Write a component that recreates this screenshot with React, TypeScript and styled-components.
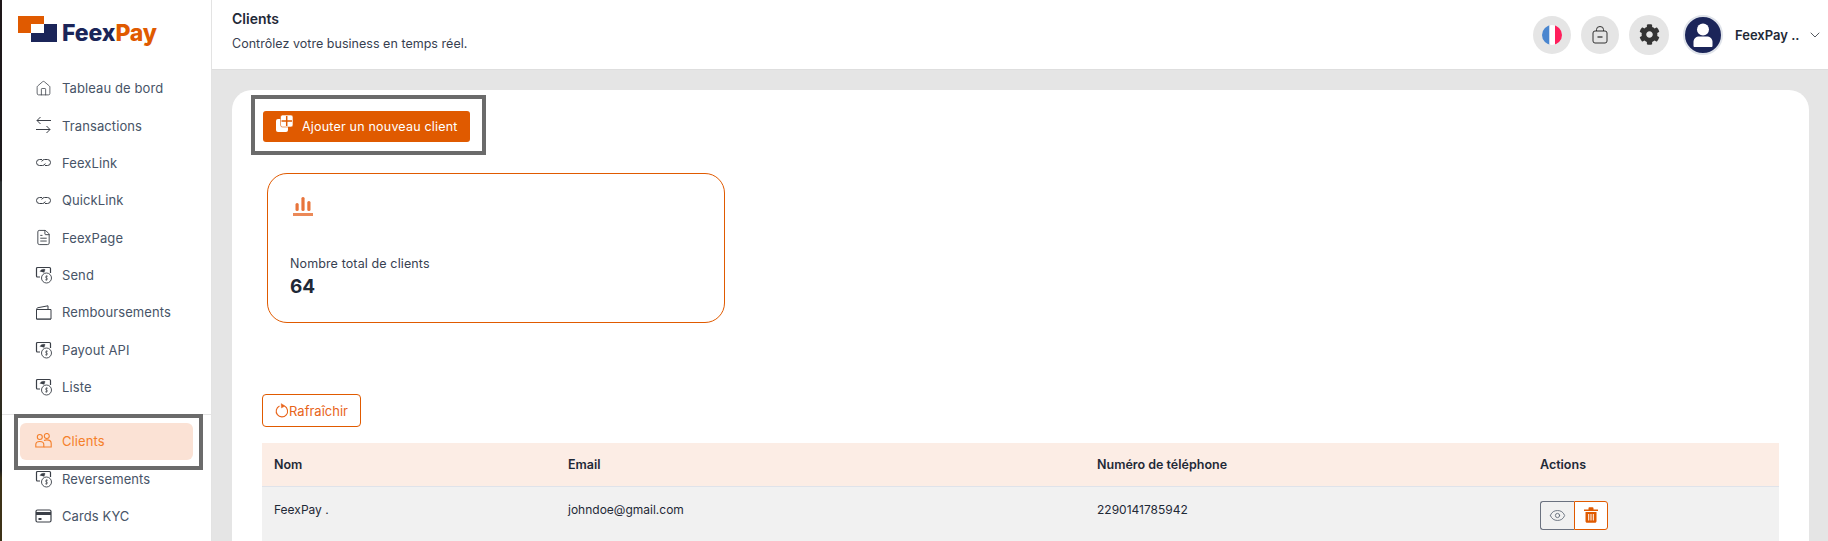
import React from "react"
import styled, { createGlobalStyle } from "styled-components"
import { ChevronDown, Eye, FileText, House } from "lucide-react"
import { FaCog } from "react-icons/fa"

const ORANGE = "#e05a00"
const NAVY = "#1b2559"

const GlobalStyle = createGlobalStyle`
  html, body {
    margin: 0;
    padding: 0;
    height: 100%;
    overflow: hidden;
    background: #fff;
    font-family: Inter, "Liberation Sans", sans-serif;
  }
  * { box-sizing: border-box; }
`

const Shell = styled.div`
  display: flex;
  width: 1828px;
  height: 541px;
  overflow: hidden;
`

const WindowEdge = styled.div`
  flex: 0 0 2px;
  background: linear-gradient(
    to bottom,
    #1e1719 0,
    #1c1a1c 180px,
    #2b3030 182px,
    #2b3030 355px,
    #3a2a20 360px,
    #2a2c20 420px,
    #1d1d1d 470px,
    #3d3318 478px,
    #3d3318 541px
  );
`

const Sidebar = styled.aside`
  flex: 0 0 210px;
  border-right: 1px solid #e3e3e3;
  background: #fff;
  overflow: hidden;
`

const LogoRow = styled.div`
  height: 69.6px;
  display: flex;
  align-items: flex-start;
  padding: 16px 0 0 16px;
  gap: 5px;
`

const LogoText = styled.span`
  font-size: 23px;
  line-height: 30px;
  margin-top: 2px;
  font-weight: 800;
  letter-spacing: -0.1px;
  color: ${NAVY};

  span {
    color: ${ORANGE};
  }
`

const NavList = styled.nav`
  display: flex;
  flex-direction: column;
`

const NavItem = styled.div`
  height: 37.33px;
  display: flex;
  align-items: center;
  gap: 10px;
  padding-left: 33px;
  font-size: 13px;
  letter-spacing: 0.1px;
  color: #475467;

  svg {
    flex: 0 0 17px;
    color: #3a3f47;
  }
`

const NavDivider = styled.div`
  height: 1px;
  margin-top: 8.4px;
  margin-bottom: 8px;
  background: #e5e5e5;
`

const ActiveNavItem = styled(NavItem)`
  position: relative;
  z-index: 1;
  margin: 0 18px 0 18px;
  padding: 0 0 2px 15px;
  color: #f57f2a;

  svg {
    color: #f57f2a;
  }

  &::before {
    content: "";
    position: absolute;
    inset: 0;
    z-index: -1;
    border-radius: 6px;
    background: #fbe2d5;
  }

  &::after {
    content: "";
    position: absolute;
    inset: -9px -10px -10px -6px;
    z-index: -2;
    border: 4px solid #6b6b6b;
    background: #fff;
  }
`

const Main = styled.div`
  flex: 1;
  min-width: 0;
  display: flex;
  flex-direction: column;
  background: #e5e5e5;
`

const TopBar = styled.header`
  flex: 0 0 70px;
  display: flex;
  align-items: flex-start;
  justify-content: space-between;
  padding: 0 5px 0 20px;
  background: #fff;
  border-bottom: 1px solid #dedede;
`

const Heading = styled.div`
  padding-top: 10px;
`

const PageTitle = styled.h1`
  margin: 0;
  font-size: 14px;
  line-height: 18px;
  font-weight: 600;
  color: #1f2937;
`

const PageSubtitle = styled.p`
  margin: 8px 0 0;
  font-size: 12.5px;
  line-height: 16px;
  letter-spacing: 0.03px;
  color: #374151;
`

const TopActions = styled.div`
  display: flex;
  align-items: center;
  height: 69px;
`

const RoundButton = styled.div<{ $size: number; $gap: number }>`
  width: ${props => props.$size}px;
  height: ${props => props.$size}px;
  margin-right: ${props => props.$gap}px;
  border-radius: 50%;
  background: #e5e5e5;
  display: flex;
  align-items: center;
  justify-content: center;
  color: #333;
`

const Avatar = styled.div`
  width: 40px;
  height: 40px;
  border-radius: 50%;
  background: ${NAVY};
  border: 2px solid #dfe3ea;
  overflow: hidden;
`

const UserName = styled.span`
  margin-left: 12px;
  width: 72px;
  font-size: 13px;
  font-weight: 600;
  color: #1f2937;
`

const Content = styled.main`
  flex: 1;
  min-height: 0;
  padding: 20px 19px 0 20px;
`

const Card = styled.section`
  height: 100%;
  padding: 21px 30px 0 30px;
  background: #fff;
  border-radius: 20px 20px 0 0;
  overflow: hidden;
`

const AddButton = styled.button`
  position: relative;
  display: flex;
  align-items: center;
  gap: 9px;
  width: 207px;
  height: 31px;
  margin-left: 1px;
  padding: 0 0 0 13px;
  border: 0;
  border-radius: 3px;
  background: ${ORANGE};
  color: #fff;
  font-family: inherit;
  font-size: 12.5px;
  letter-spacing: 0.2px;

  svg {
    margin-top: -7px;
  }

  &::after {
    content: "";
    position: absolute;
    inset: -16px -16px -13px -12px;
    border: 4px solid #6b6b6b;
  }
`

const StatCard = styled.div`
  width: 458px;
  height: 150px;
  margin: 31px 0 0 5px;
  padding: 22px 0 0 25px;
  border: 1px solid ${ORANGE};
  border-radius: 20px;
`

const StatLabel = styled.div`
  margin: 35px 0 0 -3px;
  font-size: 12.5px;
  line-height: 18px;
  letter-spacing: 0.12px;
  color: #374151;
`

const StatValue = styled.div`
  margin: 2px 0 0 -3px;
  font-size: 19px;
  line-height: 24px;
  font-weight: 700;
  color: #1f2937;
`

const RefreshButton = styled.button`
  display: flex;
  align-items: center;
  justify-content: center;
  width: 99px;
  height: 33px;
  margin-top: 71px;
  padding: 0;
  border: 1px solid ${ORANGE};
  border-radius: 4px;
  background: #fff;
  color: #e8641a;
  font-family: inherit;
  font-size: 13px;
`

const ClientsTable = styled.table`
  width: 100%;
  margin-top: 16px;
  border-collapse: collapse;
  table-layout: fixed;
`

const HeadCell = styled.th<{ $width?: number }>`
  width: ${props => (props.$width ? `${props.$width}px` : "auto")};
  height: 43px;
  padding: 0 12px;
  background: #fcede5;
  border-bottom: 1px solid #dfe3ea;
  text-align: left;
  font-size: 12.5px;
  font-weight: 600;
  color: #1f2937;
`

const BodyCell = styled.td`
  height: 90px;
  padding: 15px 12px 0;
  vertical-align: top;
  background: #f1f1f1;
  font-size: 12px;
  line-height: 16px;
  color: #1f2937;
`

const ActionGroup = styled.div`
  display: flex;
  margin-top: -1px;
`

const ViewButton = styled.div`
  width: 34px;
  height: 29px;
  display: flex;
  align-items: center;
  justify-content: center;
  border: 1px solid #6b7280;
  border-right: 0;
  border-radius: 3px 0 0 3px;
  color: #5b6472;
`

const DeleteButton = styled.div`
  width: 34px;
  height: 29px;
  display: flex;
  align-items: center;
  justify-content: center;
  border: 1px solid ${ORANGE};
  border-radius: 0 3px 3px 0;
  background: #fff;
  color: ${ORANGE};
`

const LogoMark = () => (
  <svg width="39" height="26" viewBox="0 0 39 26">
    <path d="M0 0h26v8H13v9H0z" fill={ORANGE} />
    <path d="M26 8h13v18H13v-9h13z" fill={NAVY} />
  </svg>
)

const SwapIcon = () => (
  <svg width="17" height="17" viewBox="0 0 17 17" fill="none" stroke="currentColor" strokeWidth="1">
    <path d="M16 5H2M5.500 1.500 2 5l3.500 3.500" transform="translate(0 -1.500)" />
    <path d="M1 11h14M11.500 7.500 15 11l-3.500 3.500" transform="translate(0 1.500)" />
  </svg>
)

const LinkIcon = () => (
  <svg width="17" height="17" viewBox="0 0 17 17" fill="none" stroke="currentColor" strokeWidth="1">
    <path d="M7 5.500H4.500a3 3 0 0 0 0 6h3a3 3 0 0 0 2.800-2" />
    <path d="M10 11.500h2.500a3 3 0 0 0 0-6h-3a3 3 0 0 0-2.800 2" />
  </svg>
)

const PayoutIcon = () => (
  <svg width="17" height="18" viewBox="0 0 17 18" fill="none" stroke="currentColor">
    <path d="M5 11H2.500a1 1 0 0 1-1-1V2.500a1 1 0 0 1 1-1h12a1 1 0 0 1 1 1V7" strokeWidth="1.200" />
    <path d="M5 5.500c1-2 3-2.500 5-2l-1 3" fill="currentColor" strokeWidth="0.500" />
    <circle cx="11.500" cy="12" r="5" fill="#fff" strokeWidth="0.900" />
    <path d="M13 10.200h-2.200v1.800h1.400v1.800H10M11.500 9.300v5.400" strokeWidth="0.600" />
  </svg>
)

const WalletIcon = () => (
  <svg width="17" height="15" viewBox="0 0 17 15" fill="none" stroke="currentColor" strokeWidth="1">
    <path d="M1.500 4.500h14.500v9.500H1.500z" />
    <path d="M1.500 4.500c0-1 .6-1.500 1.500-1.800L13 .8v3.700" />
    <path d="M1.500 14.500h14.500" strokeWidth="1.500" opacity="0.6" />
  </svg>
)

const CardIcon = () => (
  <svg width="17" height="14" viewBox="0 0 17 14" fill="none" stroke="currentColor" strokeWidth="1.200">
    <rect x="1" y="1" width="15" height="12" rx="1.500" />
    <path d="M1 4.500h15" strokeWidth="3" />
    <path d="M3.500 10h3" strokeWidth="2" />
  </svg>
)

const PeopleIcon = () => (
  <svg width="17" height="15" viewBox="0 0 17 15" fill="none" stroke="currentColor" strokeWidth="1.100">
    <circle cx="4.800" cy="4" r="2.500" />
    <circle cx="11.800" cy="3" r="2.500" />
    <path d="M.8 14v-2.500c0-1.700 1.500-3 4-3s4 1.300 4 3V14z" />
    <path d="M9 7.500c.8-.4 1.700-.6 2.800-.6 2.600 0 4.400 1.400 4.400 3.500V14H8.800" />
  </svg>
)

const AddIcon = () => (
  <svg width="17" height="17" viewBox="0 0 17 17">
    <rect x="0" y="4" width="12" height="13" rx="2" fill="#fff" />
    <rect x="4.500" y="0" width="12.500" height="12" rx="2" fill="#fff" stroke={ORANGE} strokeWidth="0.600" />
    <path d="M10.700 1v10M5.500 6h10.500" stroke={ORANGE} strokeWidth="1.500" />
  </svg>
)

const ChartIcon = () => (
  <svg width="20" height="20" viewBox="0 0 20 20" fill="#e8743b">
    <rect x="2.500" y="7" width="3.200" height="8" rx="1.500" />
    <rect x="8.400" y="1" width="3.200" height="14" rx="1.500" />
    <rect x="14.300" y="5" width="3.200" height="10" rx="1.500" />
    <rect x="0" y="17" width="20" height="3" opacity="0.85" />
  </svg>
)

const RefreshIcon = () => (
  <svg width="14" height="15" viewBox="0 0 14 15" fill="none" stroke="currentColor" strokeWidth="1.100">
    <path d="M9.500 3.100A5.700 5.700 0 1 1 4.500 3" />
    <path d="M6.200 0.600 10 3l-3.600 2z" fill="currentColor" strokeWidth="0.400" />
  </svg>
)

const FlagIcon = () => (
  <svg width="20" height="20" viewBox="0 0 20 20">
    <defs>
      <clipPath id="flag-round">
        <circle cx="10" cy="10" r="10" />
      </clipPath>
    </defs>
    <g clipPath="url(#flag-round)">
      <rect x="0" width="7.500" height="20" fill="#4a86cf" />
      <rect x="7.500" width="5.500" height="20" fill="#fff" />
      <rect x="13" width="7" height="20" fill="#ff1f5c" />
    </g>
  </svg>
)

const BagIcon = () => (
  <svg width="16" height="18" viewBox="0 0 16 18" fill="none" stroke="currentColor" strokeWidth="1">
    <rect x="1" y="5" width="14" height="12" rx="2" />
    <path d="M4.500 5V3.500a3.500 3 0 0 1 7 0V5" />
    <path d="M5.500 11h5" strokeWidth="1.300" />
  </svg>
)

const UserGlyph = () => (
  <svg width="36" height="36" viewBox="0 0 36 36" fill="#fff">
    <circle cx="18" cy="12.500" r="6" />
    <path d="M8.500 29v-4c0-3.500 2.500-5.500 6-5.500h7c3.500 0 6 2 6 5.500v4c0 .5-.5 1-1 1H9.500c-.5 0-1-.5-1-1z" />
  </svg>
)

const TrashIcon = () => (
  <svg width="14" height="16" viewBox="0 0 14 16" fill="currentColor">
    <path d="M0 2.500h14V4H0zM4.500 1.200C4.500.6 5 .3 5.500.3h3c.6 0 1 .3 1 .9v1.300h-5z" />
    <path fillRule="evenodd" d="M1.500 5h11v9.300c0 .9-.7 1.500-1.500 1.500H3c-.8 0-1.500-.6-1.500-1.500zM4.200 7v6.500h1V7zm2.300 0v6.500h1V7zm2.300 0v6.500h1V7z" />
  </svg>
)

const topNav = [
  { label: "Tableau de bord", icon: <House size={17} strokeWidth={1.1} /> },
  { label: "Transactions", icon: <SwapIcon /> },
  { label: "FeexLink", icon: <LinkIcon /> },
  { label: "QuickLink", icon: <LinkIcon /> },
  { label: "FeexPage", icon: <FileText size={17} strokeWidth={1.3} /> },
  { label: "Send", icon: <PayoutIcon /> },
  { label: "Remboursements", icon: <WalletIcon /> },
  { label: "Payout API", icon: <PayoutIcon /> },
  { label: "Liste", icon: <PayoutIcon /> },
]

const App: React.FC = () => (
  <>
    <GlobalStyle />
    <Shell>
      <WindowEdge />
      <Sidebar>
        <LogoRow>
          <LogoMark />
          <LogoText>
            Feex<span>Pay</span>
          </LogoText>
        </LogoRow>
        <NavList>
          {topNav.map(item => (
            <NavItem key={item.label}>
              {item.icon}
              {item.label}
            </NavItem>
          ))}
          <NavDivider />
          <ActiveNavItem>
            <PeopleIcon />
            Clients
          </ActiveNavItem>
          <NavItem>
            <PayoutIcon />
            Reversements
          </NavItem>
          <NavItem>
            <CardIcon />
            Cards KYC
          </NavItem>
        </NavList>
      </Sidebar>
      <Main>
        <TopBar>
          <Heading>
            <PageTitle>Clients</PageTitle>
            <PageSubtitle>Contrôlez votre business en temps réel.</PageSubtitle>
          </Heading>
          <TopActions>
            <RoundButton $size={38} $gap={10}>
              <FlagIcon />
            </RoundButton>
            <RoundButton $size={38} $gap={10}>
              <BagIcon />
            </RoundButton>
            <RoundButton $size={40} $gap={14}>
              <FaCog size={21} />
            </RoundButton>
            <Avatar>
              <UserGlyph />
            </Avatar>
            <UserName>FeexPay ..</UserName>
            <ChevronDown size={16} strokeWidth={1.3} color="#3a3f47" />
          </TopActions>
        </TopBar>
        <Content>
          <Card>
            <AddButton>
              <AddIcon />
              Ajouter un nouveau client
            </AddButton>
            <StatCard>
              <ChartIcon />
              <StatLabel>Nombre total de clients</StatLabel>
              <StatValue>64</StatValue>
            </StatCard>
            <RefreshButton>
              <RefreshIcon />
              Rafraîchir
            </RefreshButton>
            <ClientsTable>
              <thead>
                <tr>
                  <HeadCell $width={294}>Nom</HeadCell>
                  <HeadCell $width={529}>Email</HeadCell>
                  <HeadCell $width={443}>Numéro de téléphone</HeadCell>
                  <HeadCell>Actions</HeadCell>
                </tr>
              </thead>
              <tbody>
                <tr>
                  <BodyCell>FeexPay .</BodyCell>
                  <BodyCell>johndoe@gmail.com</BodyCell>
                  <BodyCell>2290141785942</BodyCell>
                  <BodyCell>
                    <ActionGroup>
                      <ViewButton>
                        <Eye size={17} strokeWidth={1.2} />
                      </ViewButton>
                      <DeleteButton>
                        <TrashIcon />
                      </DeleteButton>
                    </ActionGroup>
                  </BodyCell>
                </tr>
              </tbody>
            </ClientsTable>
          </Card>
        </Content>
      </Main>
    </Shell>
  </>
)

export default App
